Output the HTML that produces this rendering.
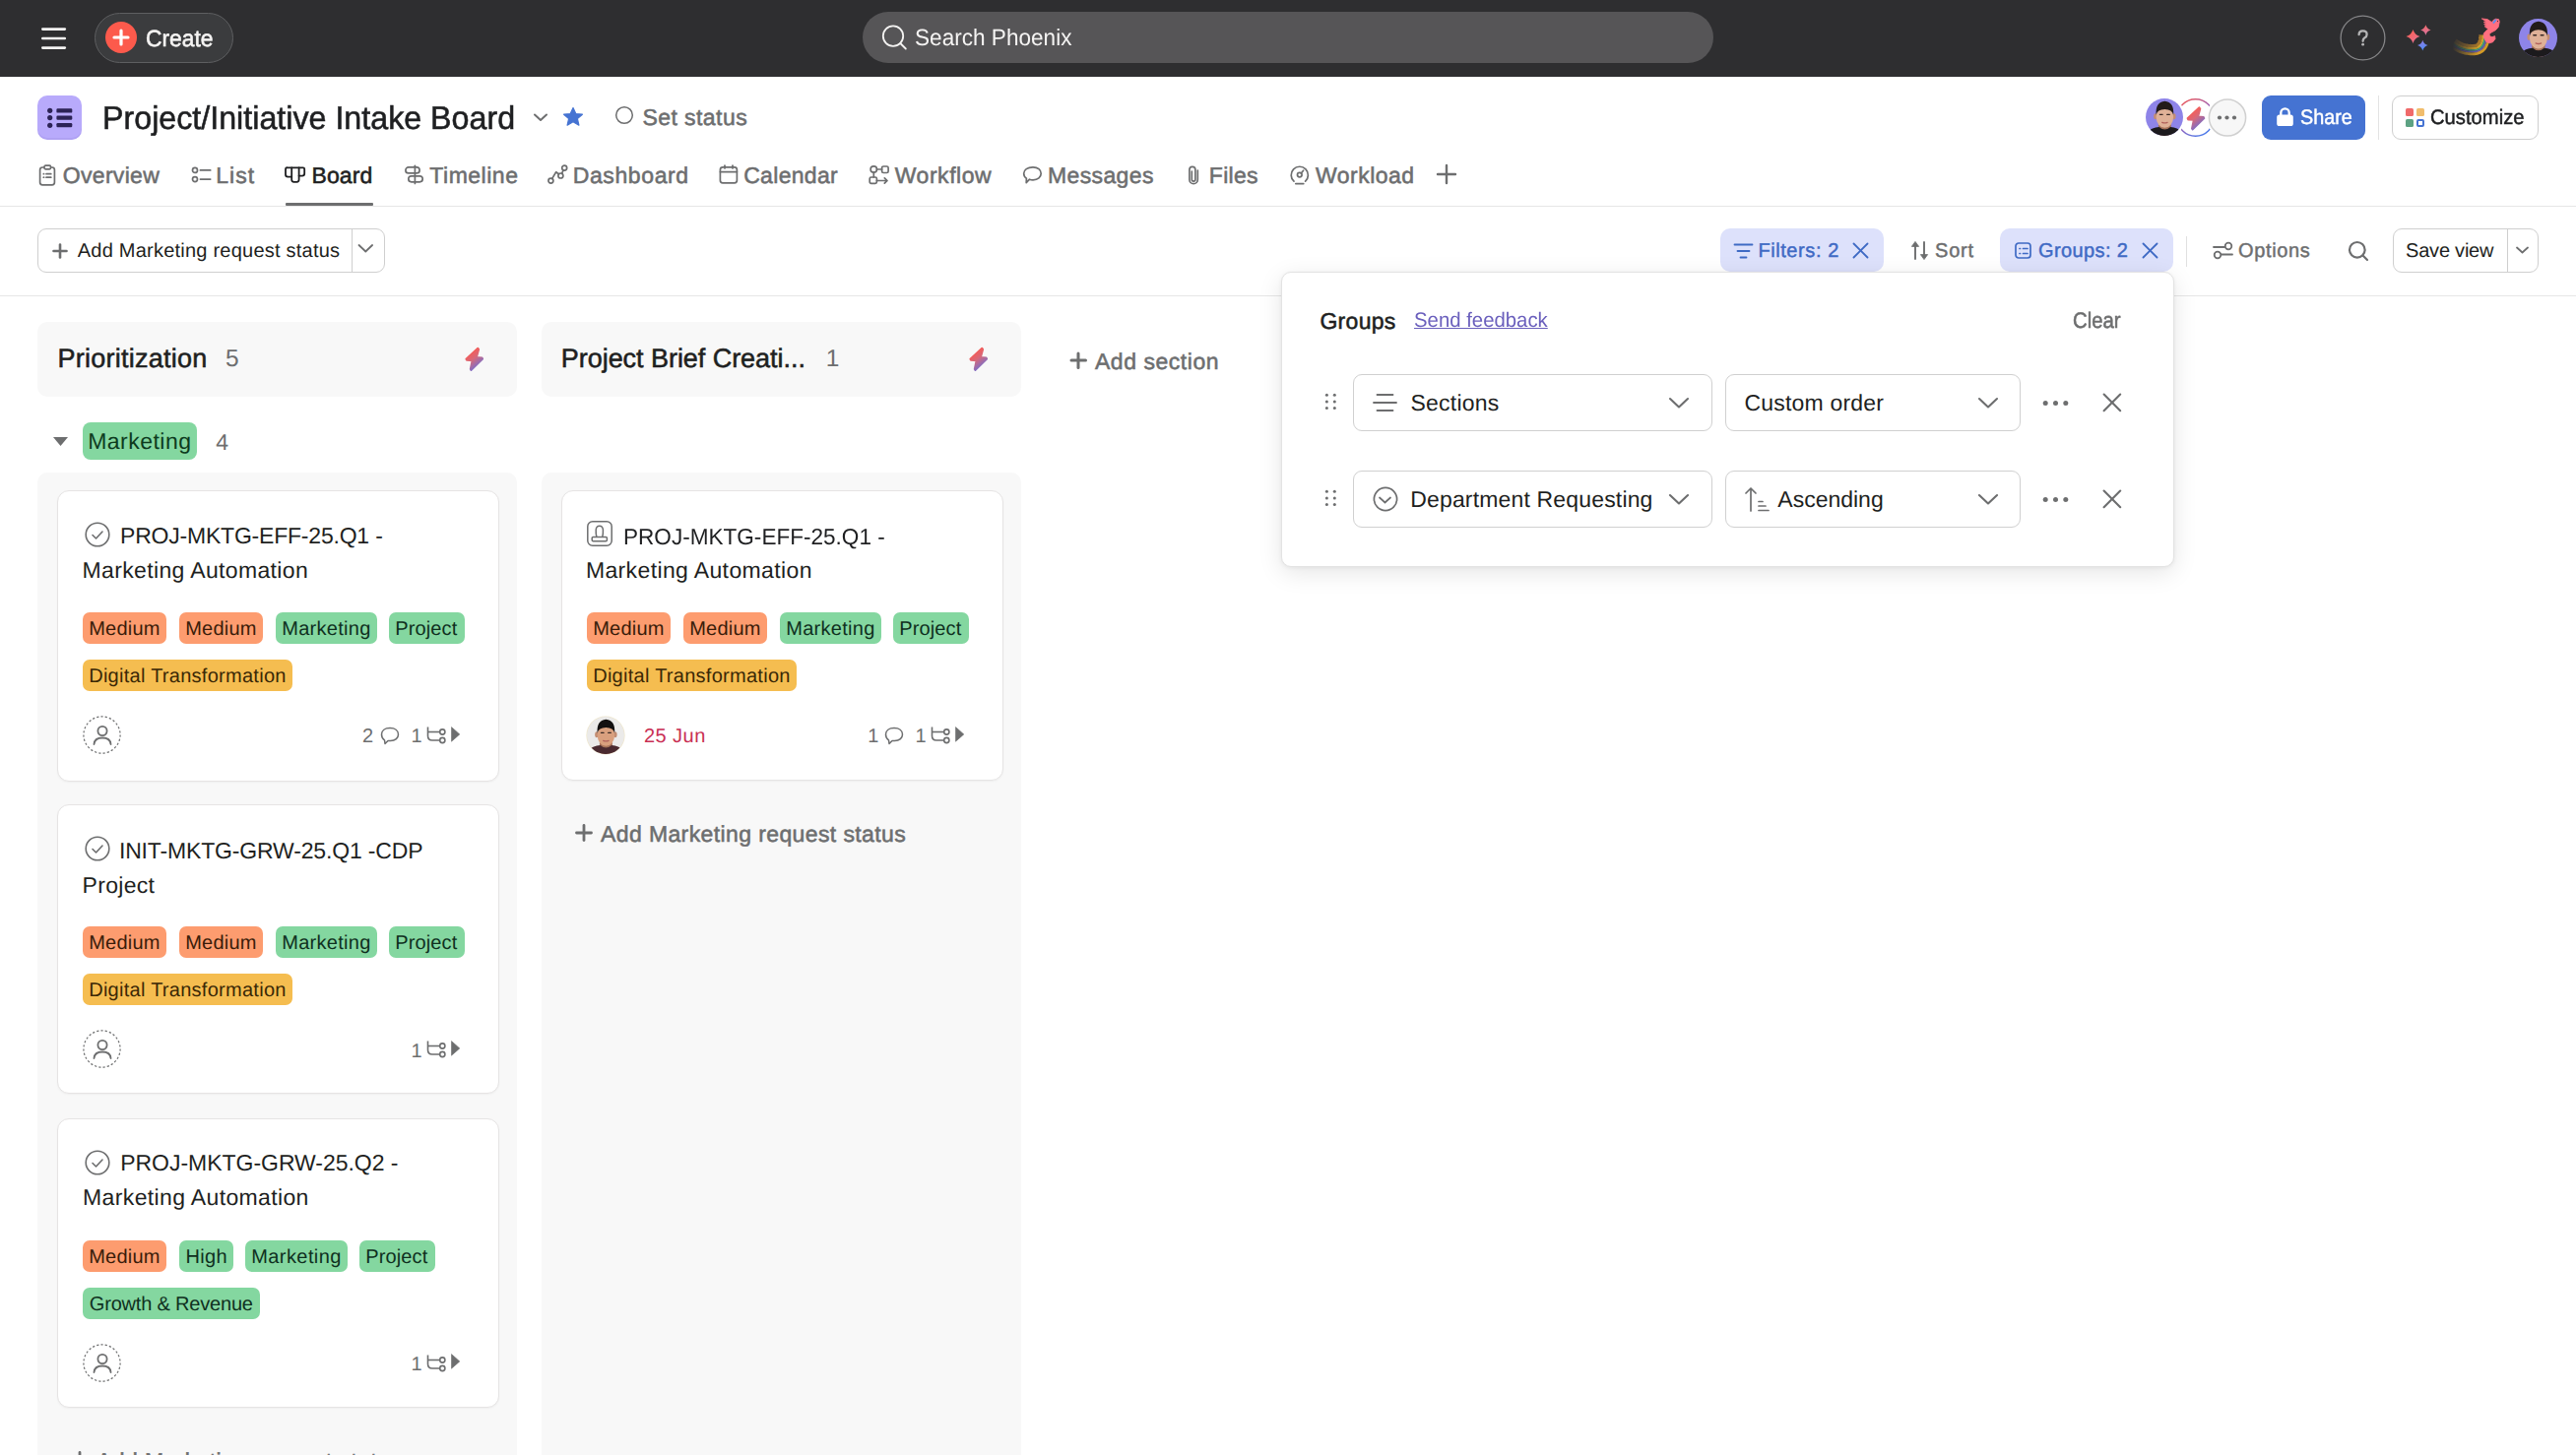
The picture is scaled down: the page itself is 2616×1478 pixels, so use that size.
<!DOCTYPE html>
<html><head><meta charset="utf-8"><style>
html,body{margin:0;padding:0;}
body{width:2616px;height:1478px;position:relative;overflow:hidden;background:#fff;font-family:"Liberation Sans",sans-serif;text-rendering:geometricPrecision;}
.t{position:absolute;white-space:nowrap;}
.r{position:absolute;}
.s{position:absolute;overflow:visible;}
</style></head><body>
<div class="r" style="left:0px;top:0px;width:2616px;height:78px;background:#2e2e30;"></div>
<svg class="s" style="left:42px;top:28px;" width="26" height="22" viewBox="0 0 26 22"><g stroke="#f5f4f3" stroke-width="2.6" stroke-linecap="round"><line x1="1.3" y1="1.6" x2="23.8" y2="1.6"/><line x1="1.3" y1="11" x2="23.8" y2="11"/><line x1="1.3" y1="20.6" x2="23.8" y2="20.6"/></g></svg>
<div class="r" style="left:96px;top:13px;width:141px;height:51px;background:#3b3c3e;border:1.5px solid #5e5f61;border-radius:26px;box-sizing:border-box;"></div>
<svg class="s" style="left:107px;top:22px;" width="32" height="32" viewBox="0 0 32 32"><circle cx="16" cy="16" r="16" fill="#fc5a4c"/><g stroke="#fff" stroke-width="3.2" stroke-linecap="round"><line x1="9" y1="16" x2="23" y2="16"/><line x1="16" y1="9" x2="16" y2="23"/></g></svg>
<div class="t" style="left:148.4px;top:28.2px;font-size:23.5px;line-height:23.5px;color:#f5f4f3;transform:scaleX(0.9708);transform-origin:0 0;-webkit-text-stroke:0.55px #f5f4f3;">Create</div>
<div class="r" style="left:876px;top:12px;width:864px;height:52px;background:#565557;border-radius:26px;"></div>
<svg class="s" style="left:893px;top:23px;" width="30" height="30" viewBox="0 0 30 30"><circle cx="14" cy="13.6" r="10.2" fill="none" stroke="#f5f4f3" stroke-width="1.8"/><line x1="21.3" y1="21" x2="26.8" y2="26.5" stroke="#f5f4f3" stroke-width="1.8" stroke-linecap="round"/></svg>
<div class="t" style="left:928.7px;top:27.0px;font-size:23.5px;line-height:23.5px;color:#f5f4f3;transform:scaleX(0.9611);transform-origin:0 0;">Search Phoenix</div>
<svg class="s" style="left:2376px;top:15px;" width="47" height="47" viewBox="0 0 47 47"><circle cx="23.5" cy="23.5" r="22.4" fill="none" stroke="#858587" stroke-width="1.3"/><path d="M19.6 20.2 Q19.6 16.4 23.6 16.4 Q27.6 16.4 27.6 19.9 Q27.6 22.3 25.2 23.6 Q23.6 24.6 23.6 26.8" fill="none" stroke="#b4b4b5" stroke-width="2.3" stroke-linecap="round"/><circle cx="23.6" cy="30.2" r="1.4" fill="#b4b4b5"/></svg>
<svg class="s" style="left:2436px;top:20px;" width="36" height="36" viewBox="0 0 36 36"><defs><linearGradient id="sp1" x1="0" y1="0" x2="0.6" y2="1"><stop offset="0" stop-color="#ff5d4a"/><stop offset="1" stop-color="#e8708e"/></linearGradient><linearGradient id="sp2" x1="0" y1="0" x2="0" y2="1"><stop offset="0" stop-color="#f26a6a"/><stop offset="1" stop-color="#d874a0"/></linearGradient><linearGradient id="sp3" x1="0" y1="0" x2="0.3" y2="1"><stop offset="0" stop-color="#9a7ae0"/><stop offset="1" stop-color="#4f8cf7"/></linearGradient></defs><path d="M14.5 10 Q16.04 15.46 21.5 17 Q16.04 18.54 14.5 24 Q12.96 18.54 7.5 17 Q12.96 15.46 14.5 10Z" fill="url(#sp1)"/><path d="M27.4 5.3 Q28.543999999999997 9.356 32.6 10.5 Q28.543999999999997 11.644 27.4 15.7 Q26.256 11.644 22.2 10.5 Q26.256 9.356 27.4 5.3Z" fill="url(#sp2)"/><path d="M24.3 20.8 Q25.466 24.934 29.6 26.1 Q25.466 27.266000000000002 24.3 31.400000000000002 Q23.134 27.266000000000002 19.0 26.1 Q23.134 24.934 24.3 20.8Z" fill="url(#sp3)"/></svg>
<svg class="s" style="left:2486px;top:14px;" width="56" height="48" viewBox="0 0 56 48"><defs><linearGradient id="tfade" x1="0" y1="0" x2="1" y2="0"><stop offset="0.08" stop-color="#fff" stop-opacity="0"/><stop offset="0.3" stop-color="#fff" stop-opacity="0.45"/><stop offset="0.55" stop-color="#fff" stop-opacity="1"/></linearGradient><mask id="tmask"><rect x="0" y="0" width="56" height="48" fill="url(#tfade)"/></mask><filter id="tblur" x="-20%" y="-20%" width="140%" height="140%"><feGaussianBlur stdDeviation="0.7"/></filter></defs><g mask="url(#tmask)"><g filter="url(#tblur)"><path d="M33.00 21.42 L32.95 22.91 L32.84 24.27 L32.68 25.50 L32.48 26.61 L32.23 27.58 L31.96 28.43 L31.66 29.16 L31.34 29.77 L31.01 30.29 L30.67 30.71 L30.31 31.08 L29.92 31.39 L29.50 31.66 L29.01 31.91 L28.44 32.13 L27.79 32.31 L27.03 32.46 L26.18 32.56 L25.22 32.61 L24.15 32.60 L24.10 32.60 L22.95 32.55 L21.84 32.47 L20.77 32.34 L19.74 32.18 L18.76 31.99 L17.81 31.77 L16.90 31.52 L16.02 31.25 L15.17 30.96 L14.36 30.64 L13.58 30.31 L12.83 29.96 L12.11 29.59 L11.41 29.22 L10.74 28.83 L10.10 28.44 L9.48 28.04 L8.88 27.63 L8.31 27.23 L7.76 26.82" stroke="#a8772a" stroke-width="3.2" fill="none"/><path d="M35.60 21.46 L35.54 23.06 L35.42 24.54 L35.25 25.90 L35.02 27.16 L34.73 28.30 L34.40 29.33 L34.02 30.25 L33.59 31.08 L33.12 31.81 L32.61 32.44 L32.05 33.00 L31.45 33.49 L30.78 33.92 L30.06 34.29 L29.26 34.59 L28.39 34.84 L27.43 35.03 L26.39 35.15 L25.27 35.21 L24.07 35.20 L24.05 35.20 L22.79 35.15 L21.58 35.05 L20.42 34.92 L19.30 34.74 L18.21 34.53 L17.17 34.29 L16.17 34.02 L15.20 33.72 L14.27 33.40 L13.38 33.05 L12.52 32.68 L11.70 32.30 L10.90 31.90 L10.14 31.49 L9.41 31.07 L8.71 30.64 L8.04 30.20 L7.40 29.77 L6.79 29.33 L6.20 28.90" stroke="#cfa22c" stroke-width="2.4" fill="none"/><path d="M37.40 21.50 L37.34 23.16 L37.21 24.72 L37.03 26.18 L36.78 27.54 L36.46 28.79 L36.09 29.95 L35.65 31.01 L35.15 31.98 L34.58 32.86 L33.95 33.64 L33.26 34.34 L32.50 34.95 L31.68 35.48 L30.79 35.93 L29.83 36.30 L28.80 36.59 L27.71 36.81 L26.55 36.94 L25.31 37.01 L24.01 37.00 L24.00 37.00 L22.68 36.95 L21.41 36.85 L20.18 36.70 L18.99 36.52 L17.84 36.30 L16.73 36.04 L15.67 35.75 L14.64 35.43 L13.65 35.08 L12.70 34.71 L11.79 34.32 L10.91 33.92 L10.07 33.49 L9.26 33.06 L8.49 32.61 L7.75 32.16 L7.05 31.70 L6.38 31.25 L5.73 30.79 L5.12 30.34" stroke="#3f9f7e" stroke-width="1.7" fill="none"/><path d="M39.10 21.53 L39.04 23.26 L38.91 24.90 L38.71 26.44 L38.44 27.89 L38.10 29.26 L37.68 30.54 L37.19 31.73 L36.62 32.83 L35.96 33.85 L35.22 34.77 L34.40 35.60 L33.50 36.33 L32.52 36.96 L31.48 37.49 L30.37 37.91 L29.20 38.25 L27.97 38.49 L26.69 38.64 L25.35 38.71 L23.95 38.70 L23.97 38.70 L22.58 38.64 L21.24 38.54 L19.95 38.39 L18.69 38.19 L17.48 37.96 L16.32 37.69 L15.19 37.38 L14.11 37.04 L13.06 36.68 L12.06 36.29 L11.09 35.88 L10.17 35.45 L9.28 35.00 L8.43 34.54 L7.62 34.07 L6.85 33.60 L6.11 33.12 L5.41 32.64 L4.74 32.17 L4.10 31.70" stroke="#6a5aae" stroke-width="1.8" fill="none"/><path d="M41.20 21.56 L41.13 23.38 L40.99 25.11 L40.78 26.76 L40.49 28.34 L40.12 29.84 L39.65 31.26 L39.09 32.61 L38.43 33.89 L37.66 35.08 L36.79 36.17 L35.81 37.16 L34.73 38.03 L33.56 38.78 L32.33 39.41 L31.03 39.91 L29.68 40.29 L28.30 40.56 L26.87 40.73 L25.39 40.81 L23.88 40.80 L23.92 40.80 L22.46 40.74 L21.04 40.63 L19.66 40.47 L18.33 40.26 L17.05 40.01 L15.80 39.72 L14.60 39.40 L13.45 39.04 L12.33 38.65 L11.27 38.23 L10.24 37.79 L9.25 37.34 L8.31 36.86 L7.41 36.37 L6.55 35.88 L5.73 35.38 L4.95 34.87 L4.21 34.37 L3.50 33.87 L2.84 33.38" stroke="#d39a26" stroke-width="2.8" fill="none"/></g></g><path fill="#ff6f80" stroke="#ff6f80" stroke-width="0.8" stroke-linejoin="round" d="M34.3 4.9 L40 5.6 L44.5 8.5 L46 6.5 L48.5 5.2 L51.5 5.6 L52.3 8 L51.2 13.5 L48.2 16.8 L44 19 L42 20.5 L42.2 22.8 L45 23.6 L47.6 22.6 L48 25.5 L45.5 28.8 L42 29.8 L38.8 28.5 L36.2 24 L36.3 20 L38.8 17.2 L41 15.6 L39.2 14.4 L37.2 12.8 L39.2 12.2 L36.6 10.6 L39.3 10.1 L36.2 8.4 L38.8 7.9Z"/><path d="M46.4 8.9 L48.4 6.4" stroke="#5b8ef0" stroke-width="1.9" fill="none" stroke-linecap="round"/><circle cx="50.5" cy="7.6" r="0.55" fill="#3a2030"/></svg>
<svg class="s" style="left:2558px;top:19px;" width="39" height="39" viewBox="0 0 39 39"><defs><clipPath id="cpa"><circle cx="19.5" cy="19.5" r="19.5"/></clipPath></defs><g clip-path="url(#cpa)"><rect width="39" height="39" fill="#8e84e8"/><rect x="13.26" y="24.18" width="13.26" height="15.60" fill="#a8745a"/><path d="M0 39.00 L2.34 34.32 Q6.24 30.42 14.04 29.64 Q19.89 35.10 25.74 29.64 Q33.54 30.42 37.05 34.32 L39 39.00Z" fill="#1c1a1d"/><ellipse cx="10.14" cy="18.72" rx="1.75" ry="3.12" fill="#c38d72"/><ellipse cx="29.64" cy="18.72" rx="1.75" ry="3.12" fill="#c38d72"/><ellipse cx="19.89" cy="19.50" rx="8.97" ry="11.11" fill="#dfb197"/><path d="M10.92 17.16 Q9.75 3.90 19.89 2.73 Q30.03 3.90 28.86 17.16 Q27.69 11.70 19.89 11.31 Q12.09 11.70 10.92 17.16Z" fill="#221b1a"/><g stroke="#3a2a25" stroke-width="1.37" stroke-linecap="round"><line x1="14.82" y1="16.77" x2="17.55" y2="16.77"/><line x1="22.23" y1="16.77" x2="24.96" y2="16.77"/></g><path d="M17.16 24.96 Q19.89 26.13 22.62 24.96" stroke="#b0605a" stroke-width="1.37" fill="none" stroke-linecap="round"/></g></svg>
<div class="r" style="left:38px;top:97px;width:45px;height:45px;background:#b8aafb;border-radius:10px;box-shadow:inset 0 -2px 0 rgba(60,40,140,0.07);"></div>
<svg class="s" style="left:38px;top:97px;" width="45" height="45" viewBox="0 0 45 45"><g fill="#2c2356"><circle cx="12.7" cy="15.3" r="2.6"/><circle cx="12.7" cy="22.6" r="2.6"/><circle cx="12.7" cy="30.3" r="2.6"/><rect x="19.4" y="13.3" width="15.9" height="4.3" rx="1.2"/><rect x="19.4" y="20.6" width="15.9" height="4.2" rx="1.2"/><rect x="19.4" y="28.1" width="15.9" height="4.2" rx="1.2"/></g></svg>
<div class="t" style="left:104.2px;top:103.0px;font-size:33px;line-height:33px;color:#1e1f21;transform:scaleX(0.9764);transform-origin:0 0;-webkit-text-stroke:0.55px #1e1f21;">Project/Initiative Intake Board</div>
<svg class="s" style="left:540px;top:113px;" width="18" height="12" viewBox="0 0 18 12"><path d="M3 3.5 L9 9 L15 3.5" fill="none" stroke="#6d6e6f" stroke-width="2" stroke-linecap="round" stroke-linejoin="round"/></svg>
<svg class="s" style="left:571px;top:108px;" width="22" height="22" viewBox="0 0 22 22"><path d="M11 1.5 L13.8 7.6 L20.4 8.2 L15.4 12.6 L16.9 19.2 L11 15.8 L5.1 19.2 L6.6 12.6 L1.6 8.2 L8.2 7.6Z" fill="#4573d2" stroke="#4573d2" stroke-width="1.2" stroke-linejoin="round"/></svg>
<svg class="s" style="left:624px;top:107px;" width="20" height="20" viewBox="0 0 20 20"><circle cx="10" cy="10" r="8.3" fill="none" stroke="#6d6e6f" stroke-width="1.5"/></svg>
<div class="t" style="left:652.4px;top:108.3px;font-size:23px;line-height:23px;color:#6d6e6f;letter-spacing:0.444px;-webkit-text-stroke:0.55px #6d6e6f;">Set status</div>
<svg class="s" style="left:2209px;top:99px;" width="41" height="41" viewBox="0 0 41 41"><defs><linearGradient id="lg2" x1="0.1" y1="0" x2="0.8" y2="1"><stop offset="0" stop-color="#f5574f"/><stop offset="0.5" stop-color="#9b62b8"/><stop offset="1" stop-color="#3f7bf0"/></linearGradient><linearGradient id="lg3" x1="0.2" y1="0.1" x2="0.7" y2="0.95"><stop offset="0" stop-color="#ff584c"/><stop offset="0.45" stop-color="#d86878"/><stop offset="1" stop-color="#6b6fd8"/></linearGradient></defs><circle cx="20.6" cy="20.5" r="18.7" fill="#fff" stroke="url(#lg2)" stroke-width="1.5"/><g transform="translate(11.2,8.6) scale(1.0)"><path d="M13.2 1.6 L14.2 2.9 L12 10.9 L17.6 11.3 L18.2 12.6 L6.4 24 L5.7 23 L7.5 14.3 L1.9 13.9 L1.3 12.6Z" fill="url(#lg3)" stroke="url(#lg3)" stroke-width="1.8" stroke-linejoin="round"/></g></svg>
<svg class="s" style="left:2176px;top:97px;" width="44" height="44" viewBox="0 0 44 44"><circle cx="22" cy="22" r="21.2" fill="#fff"/></svg>
<svg class="s" style="left:2179px;top:100px;" width="38" height="38" viewBox="0 0 38 38"><defs><clipPath id="cpb"><circle cx="19.0" cy="19.0" r="19.0"/></clipPath></defs><g clip-path="url(#cpb)"><rect width="38" height="38" fill="#8e84e8"/><rect x="12.92" y="23.56" width="12.92" height="15.20" fill="#a8745a"/><path d="M0 38.00 L2.28 33.44 Q6.08 29.64 13.68 28.88 Q19.38 34.20 25.08 28.88 Q32.68 29.64 36.10 33.44 L38 38.00Z" fill="#1c1a1d"/><ellipse cx="9.88" cy="18.24" rx="1.71" ry="3.04" fill="#c38d72"/><ellipse cx="28.88" cy="18.24" rx="1.71" ry="3.04" fill="#c38d72"/><ellipse cx="19.38" cy="19.00" rx="8.74" ry="10.83" fill="#dfb197"/><path d="M10.64 16.72 Q9.50 3.80 19.38 2.66 Q29.26 3.80 28.12 16.72 Q26.98 11.40 19.38 11.02 Q11.78 11.40 10.64 16.72Z" fill="#221b1a"/><g stroke="#3a2a25" stroke-width="1.33" stroke-linecap="round"><line x1="14.44" y1="16.34" x2="17.10" y2="16.34"/><line x1="21.66" y1="16.34" x2="24.32" y2="16.34"/></g><path d="M16.72 24.32 Q19.38 25.46 22.04 24.32" stroke="#b0605a" stroke-width="1.33" fill="none" stroke-linecap="round"/></g></svg>
<svg class="s" style="left:2240px;top:97px;" width="44" height="44" viewBox="0 0 44 44"><circle cx="22" cy="22" r="21.5" fill="#fff"/><circle cx="22" cy="22.5" r="18.6" fill="#f7f7f7" stroke="#d0d0d0" stroke-width="1.5"/><g fill="#6d6e6f"><circle cx="14" cy="22.5" r="2.1"/><circle cx="21.5" cy="22.5" r="2.1"/><circle cx="29" cy="22.5" r="2.1"/></g></svg>
<div class="r" style="left:2297px;top:97px;width:105px;height:45px;background:#4573d2;border-radius:9px;"></div>
<svg class="s" style="left:2311px;top:106px;" width="20" height="24" viewBox="0 0 20 24"><path d="M5.3 11 V8.6 A4.2 4.2 0 0 1 13.7 8.6 V11" fill="none" stroke="#fff" stroke-width="2.3"/><rect x="1.2" y="10.4" width="16.6" height="11.6" rx="2.6" fill="#fff"/></svg>
<div class="t" style="left:2336.0px;top:109.4px;font-size:21px;line-height:21px;color:#ffffff;transform:scaleX(0.9429);transform-origin:0 0;-webkit-text-stroke:0.45px #ffffff;">Share</div>
<div class="r" style="left:2414.5px;top:97px;width:1px;height:45px;background:#e3e3e3;"></div>
<div class="r" style="left:2429px;top:97px;width:149px;height:45px;background:#fff;border:1.5px solid #cfcfcf;border-radius:9px;box-sizing:border-box;"></div>
<svg class="s" style="left:2443px;top:110px;" width="20" height="20" viewBox="0 0 20 20"><rect x="0" y="0" width="8" height="8" rx="1.6" fill="#f06a6a"/><rect x="11" y="0" width="8" height="8" rx="1.6" fill="#f1bd6c"/><rect x="0" y="11" width="8" height="8" rx="1.6" fill="#5da283"/><rect x="12" y="12" width="6" height="6" rx="1" fill="none" stroke="#4573d2" stroke-width="2"/></svg>
<div class="t" style="left:2468.3px;top:109.4px;font-size:21px;line-height:21px;color:#1e1f21;transform:scaleX(0.9630);transform-origin:0 0;-webkit-text-stroke:0.45px #1e1f21;">Customize</div>
<div class="t" style="left:63.8px;top:167.3px;font-size:23px;line-height:23px;color:#6d6e6f;letter-spacing:0.300px;-webkit-text-stroke:0.55px #6d6e6f;">Overview</div>
<div class="t" style="left:219.2px;top:167.3px;font-size:23px;line-height:23px;color:#6d6e6f;letter-spacing:1.033px;-webkit-text-stroke:0.55px #6d6e6f;">List</div>
<div class="t" style="left:316.6px;top:167.3px;font-size:23px;line-height:23px;color:#1e1f21;letter-spacing:0.050px;-webkit-text-stroke:0.55px #1e1f21;">Board</div>
<div class="t" style="left:436.3px;top:167.3px;font-size:23px;line-height:23px;color:#6d6e6f;letter-spacing:0.514px;-webkit-text-stroke:0.55px #6d6e6f;">Timeline</div>
<div class="t" style="left:581.7px;top:167.3px;font-size:23px;line-height:23px;color:#6d6e6f;letter-spacing:0.613px;-webkit-text-stroke:0.55px #6d6e6f;">Dashboard</div>
<div class="t" style="left:755.2px;top:167.3px;font-size:23px;line-height:23px;color:#6d6e6f;letter-spacing:0.314px;-webkit-text-stroke:0.55px #6d6e6f;">Calendar</div>
<div class="t" style="left:908.7px;top:167.3px;font-size:23px;line-height:23px;color:#6d6e6f;letter-spacing:0.557px;-webkit-text-stroke:0.55px #6d6e6f;">Workflow</div>
<div class="t" style="left:1064.0px;top:167.3px;font-size:23px;line-height:23px;color:#6d6e6f;letter-spacing:0.371px;-webkit-text-stroke:0.55px #6d6e6f;">Messages</div>
<div class="t" style="left:1227.8px;top:167.3px;font-size:23px;line-height:23px;color:#6d6e6f;letter-spacing:0.300px;-webkit-text-stroke:0.55px #6d6e6f;">Files</div>
<div class="t" style="left:1335.9px;top:167.3px;font-size:23px;line-height:23px;color:#6d6e6f;letter-spacing:0.500px;-webkit-text-stroke:0.55px #6d6e6f;">Workload</div>
<svg class="s" style="left:38px;top:166px;" width="20" height="23" viewBox="0 0 20 23"><g fill="none" stroke="#6d6e6f" stroke-width="1.7" stroke-linecap="round" stroke-linejoin="round"><rect x="2.6" y="4" width="14.8" height="17.8" rx="2.6"/><rect x="7" y="2.2" width="6.5" height="3.6" rx="1.2" fill="#fff"/><line x1="6.3" y1="10.7" x2="6.6" y2="10.7"/><line x1="9" y1="10.7" x2="13.8" y2="10.7"/><line x1="6.3" y1="14.2" x2="6.6" y2="14.2"/><line x1="9" y1="14.2" x2="13.8" y2="14.2"/></g></svg>
<svg class="s" style="left:192px;top:166px;" width="24" height="22" viewBox="0 0 24 22"><g fill="none" stroke="#6d6e6f" stroke-width="1.7" stroke-linecap="round" stroke-linejoin="round"><circle cx="6" cy="6.9" r="2.5"/><circle cx="6" cy="16.1" r="2.5"/><line x1="11.4" y1="6.9" x2="21.7" y2="6.9"/><line x1="11.4" y1="16.1" x2="21.7" y2="16.1"/></g></svg>
<svg class="s" style="left:288px;top:167px;" width="23" height="21" viewBox="0 0 23 21"><g fill="none" stroke="#1e1f21" stroke-width="1.8" stroke-linecap="round" stroke-linejoin="round"><path d="M3.2 3.3 H19.8 Q21.2 3.3 21.2 4.7 V9.3 Q21.2 11.6 18.9 11.6 H15.6"/><path d="M3.2 3.3 Q2 3.3 2 4.7 V10.3 Q2 12.6 4.3 12.6 H8.2"/><path d="M8.2 3.3 V15.6 Q8.2 17.8 10.4 17.8 H13.4 Q15.6 17.8 15.6 15.6 V3.3"/></g></svg>
<svg class="s" style="left:409px;top:166px;" width="23" height="23" viewBox="0 0 23 23"><g fill="none" stroke="#6d6e6f" stroke-width="1.7" stroke-linecap="round" stroke-linejoin="round"><line x1="12.4" y1="2.3" x2="12.4" y2="20.5"/><rect x="2.9" y="3.9" width="14.2" height="6" rx="3"/><rect x="5.8" y="12.8" width="14.4" height="6" rx="3"/></g></svg>
<svg class="s" style="left:555px;top:166px;" width="22" height="22" viewBox="0 0 22 22"><g fill="none" stroke="#6d6e6f" stroke-width="1.7" stroke-linecap="round" stroke-linejoin="round"><circle cx="4.4" cy="17.6" r="2.5"/><circle cx="14.4" cy="12.5" r="2.5"/><circle cx="18.2" cy="4.6" r="2.5"/><path d="M5.7 15.4 L9.7 8.8 L12.6 11"/><line x1="15.5" y1="10.3" x2="17.1" y2="6.9"/></g></svg>
<svg class="s" style="left:729px;top:166px;" width="22" height="22" viewBox="0 0 22 22"><g fill="none" stroke="#6d6e6f" stroke-width="1.7" stroke-linecap="round" stroke-linejoin="round"><rect x="2.4" y="3.8" width="17" height="16" rx="2.6"/><line x1="2.4" y1="8.6" x2="19.4" y2="8.6"/><line x1="7" y1="2.2" x2="7" y2="5"/><line x1="15" y1="2.2" x2="15" y2="5"/></g></svg>
<svg class="s" style="left:881px;top:166px;" width="23" height="23" viewBox="0 0 23 23"><g fill="none" stroke="#6d6e6f" stroke-width="1.7" stroke-linecap="round" stroke-linejoin="round"><circle cx="6.3" cy="6" r="3.2"/><rect x="14.6" y="3" width="6.5" height="6.5" rx="1.6"/><rect x="2.2" y="14" width="7.2" height="6.4" rx="1.6"/><line x1="9.5" y1="6" x2="14.6" y2="6"/><line x1="6.3" y1="9.2" x2="6.3" y2="14"/><path d="M9.4 17.5 H20 M17.3 14.8 L20 17.5 L17.3 20.2"/></g></svg>
<svg class="s" style="left:1037px;top:167px;" width="23" height="22" viewBox="0 0 23 22"><g fill="none" stroke="#6d6e6f" stroke-width="1.7" stroke-linecap="round" stroke-linejoin="round"><path d="M12 2.8 C17 2.8 20.2 5.6 20.2 9.3 C20.2 13 17 15.8 12 15.8 C10.7 15.8 9.5 15.6 8.5 15.2 L5.2 18.6 L5.4 14.2 C3.6 13 2.7 11.3 2.7 9.3 C2.7 5.6 6.5 2.8 12 2.8Z"/></g></svg>
<svg class="s" style="left:1204px;top:166px;" width="17" height="23" viewBox="0 0 17 23"><g fill="none" stroke="#6d6e6f" stroke-width="1.7" stroke-linecap="round" stroke-linejoin="round"><path d="M12.3 7 V16.5 A4.2 4.2 0 0 1 3.9 16.5 V6.3 A3 3 0 0 1 9.9 6.3 V16.3 A1.8 1.8 0 0 1 6.3 16.3 V8.2"/></g></svg>
<svg class="s" style="left:1308px;top:166px;" width="23" height="23" viewBox="0 0 23 23"><g fill="none" stroke="#6d6e6f" stroke-width="1.7" stroke-linecap="round" stroke-linejoin="round"><path d="M6 18.2 A8.6 8.6 0 1 1 17.6 18.2"/><circle cx="11.8" cy="11.6" r="2.3"/><line x1="13.3" y1="10" x2="15.6" y2="7.2"/><line x1="7.8" y1="20.6" x2="15.8" y2="20.6"/></g></svg>
<svg class="s" style="left:1458px;top:166px;" width="22" height="22" viewBox="0 0 22 22"><g stroke="#6d6e6f" stroke-width="2.4" stroke-linecap="round"><line x1="11" y1="2" x2="11" y2="20"/><line x1="2" y1="11" x2="20" y2="11"/></g></svg>
<div class="r" style="left:290px;top:206px;width:89px;height:3px;background:#6d6e6f;border-radius:1px;"></div>
<div class="r" style="left:0px;top:209px;width:2616px;height:1px;background:#e6e6e6;"></div>
<div class="r" style="left:38px;top:232px;width:353px;height:45px;background:#fff;border:1.5px solid #cfcfcf;border-radius:9px;box-sizing:border-box;"></div>
<div class="r" style="left:357px;top:233px;width:1.2px;height:43px;background:#cfcfcf;"></div>
<svg class="s" style="left:53px;top:247px;" width="16" height="16" viewBox="0 0 16 16"><g stroke="#6d6e6f" stroke-width="2.6" stroke-linecap="round"><line x1="8" y1="1.5" x2="8" y2="14.5"/><line x1="1.5" y1="8" x2="14.5" y2="8"/></g></svg>
<div class="t" style="left:78.8px;top:244.8px;font-size:20px;line-height:20px;color:#1e1f21;letter-spacing:0.226px;">Add Marketing request status</div>
<svg class="s" style="left:362px;top:246px;" width="18" height="13" viewBox="0 0 18 13"><path d="M2.5 3 L9.3 9.5 L16.1 3" fill="none" stroke="#6d6e6f" stroke-width="1.8" stroke-linecap="round" stroke-linejoin="round"/></svg>
<div class="r" style="left:1747px;top:232px;width:166px;height:44px;background:#dde1fb;border-radius:10px;"></div>
<svg class="s" style="left:1760px;top:246px;" width="21" height="18" viewBox="0 0 21 18"><g stroke="#3f6ac4" stroke-width="1.8" stroke-linecap="round"><line x1="1.5" y1="2.5" x2="19.5" y2="2.5"/><line x1="4.5" y1="9" x2="16.5" y2="9"/><line x1="7.5" y1="15.5" x2="13.5" y2="15.5"/></g></svg>
<div class="t" style="left:1785.4px;top:244.8px;font-size:20px;line-height:20px;color:#3f6ac4;letter-spacing:0.578px;-webkit-text-stroke:0.45px #3f6ac4;">Filters: 2</div>
<svg class="s" style="left:1881px;top:246px;" width="17" height="17" viewBox="0 0 17 17"><g stroke="#3f6ac4" stroke-width="1.8" stroke-linecap="round"><line x1="1.5" y1="1.5" x2="15.5" y2="15.5"/><line x1="15.5" y1="1.5" x2="1.5" y2="15.5"/></g></svg>
<svg class="s" style="left:1940px;top:244px;" width="19" height="21" viewBox="0 0 19 21"><g stroke="#6d6e6f" stroke-width="1.9" stroke-linecap="round"><line x1="5" y1="5" x2="5" y2="19"/><line x1="14" y1="2" x2="14" y2="16"/></g><g fill="#6d6e6f" stroke="#6d6e6f" stroke-width="0.8" stroke-linejoin="round"><path d="M1.4 6.4 L5 1.4 L8.6 6.4Z"/><path d="M10.4 14.6 L14 19.6 L17.6 14.6Z"/></g></svg>
<div class="t" style="left:1965.1px;top:244.8px;font-size:20px;line-height:20px;color:#6d6e6f;letter-spacing:0.767px;-webkit-text-stroke:0.45px #6d6e6f;">Sort</div>
<div class="r" style="left:2031px;top:232px;width:176px;height:44px;background:#dde1fb;border-radius:10px;"></div>
<svg class="s" style="left:2046px;top:246px;" width="18" height="18" viewBox="0 0 18 18"><g fill="none" stroke="#3f6ac4" stroke-width="1.7" stroke-linecap="round"><rect x="1" y="1" width="15" height="15" rx="3"/><line x1="5" y1="6.5" x2="5.5" y2="6.5"/><line x1="8.5" y1="6.5" x2="13" y2="6.5"/><line x1="5" y1="11.5" x2="5.5" y2="11.5"/><line x1="8.5" y1="11.5" x2="13" y2="11.5"/></g></svg>
<div class="t" style="left:2070.0px;top:244.8px;font-size:20px;line-height:20px;color:#3f6ac4;letter-spacing:0.387px;-webkit-text-stroke:0.45px #3f6ac4;">Groups: 2</div>
<svg class="s" style="left:2175px;top:246px;" width="17" height="17" viewBox="0 0 17 17"><g stroke="#3f6ac4" stroke-width="1.8" stroke-linecap="round"><line x1="1.5" y1="1.5" x2="15.5" y2="15.5"/><line x1="15.5" y1="1.5" x2="1.5" y2="15.5"/></g></svg>
<div class="r" style="left:2220px;top:240px;width:1.2px;height:31px;background:#e0e0e0;"></div>
<svg class="s" style="left:2247px;top:245px;" width="21" height="19" viewBox="0 0 21 19"><g fill="none" stroke="#6d6e6f" stroke-width="1.8" stroke-linecap="round"><line x1="1" y1="6" x2="12" y2="6"/><circle cx="16" cy="5" r="3.3"/><line x1="9" y1="13.5" x2="20" y2="13.5"/><circle cx="5" cy="14" r="3.3"/></g></svg>
<div class="t" style="left:2273.1px;top:244.8px;font-size:20px;line-height:20px;color:#6d6e6f;letter-spacing:0.617px;-webkit-text-stroke:0.45px #6d6e6f;">Options</div>
<svg class="s" style="left:2384px;top:244px;" width="22" height="22" viewBox="0 0 22 22"><circle cx="9.8" cy="9.8" r="7.8" fill="none" stroke="#6d6e6f" stroke-width="2.2"/><line x1="15.5" y1="15.5" x2="20" y2="20" stroke="#6d6e6f" stroke-width="2.2" stroke-linecap="round"/></svg>
<div class="r" style="left:2430px;top:232px;width:148px;height:45px;background:#fff;border:1.5px solid #cfcfcf;border-radius:9px;box-sizing:border-box;"></div>
<div class="r" style="left:2546px;top:233px;width:1.2px;height:43px;background:#cfcfcf;"></div>
<div class="t" style="left:2443.1px;top:244.8px;font-size:20px;line-height:20px;color:#1e1f21;letter-spacing:-0.225px;">Save view</div>
<svg class="s" style="left:2553px;top:248px;" width="17" height="12" viewBox="0 0 17 12"><path d="M3 3.5 L8.5 8.5 L14 3.5" fill="none" stroke="#6d6e6f" stroke-width="1.8" stroke-linecap="round" stroke-linejoin="round"/></svg>
<div class="r" style="left:0px;top:300px;width:2616px;height:1px;background:#e6e6e6;"></div>
<div class="r" style="left:38px;top:327px;width:487px;height:76px;background:#f8f8f8;border-radius:10px;"></div>
<div class="r" style="left:38px;top:480px;width:487px;height:1000px;background:#f8f8f8;border-radius:10px 10px 0 0;"></div>
<div class="r" style="left:550px;top:327px;width:487px;height:76px;background:#f8f8f8;border-radius:10px;"></div>
<div class="r" style="left:550px;top:480px;width:487px;height:1000px;background:#f8f8f8;border-radius:10px 10px 0 0;"></div>
<div class="t" style="left:58.4px;top:351.0px;font-size:27px;line-height:27px;color:#1e1f21;letter-spacing:0.262px;-webkit-text-stroke:0.55px #1e1f21;">Prioritization</div>
<div class="t" style="left:228.9px;top:352.6px;font-size:24.5px;line-height:24.5px;color:#6d6e6f;">5</div>
<div class="t" style="left:569.8px;top:351.0px;font-size:27px;line-height:27px;color:#1e1f21;letter-spacing:-0.045px;-webkit-text-stroke:0.55px #1e1f21;">Project Brief Creati...</div>
<div class="t" style="left:838.7px;top:352.6px;font-size:24.5px;line-height:24.5px;color:#6d6e6f;">1</div>
<svg class="s" style="left:472px;top:352px;" width="20" height="26" viewBox="0 0 20 26"><defs><linearGradient id="bg1" x1="0.2" y1="0.1" x2="0.7" y2="0.95"><stop offset="0" stop-color="#ff584c"/><stop offset="0.45" stop-color="#d86878"/><stop offset="1" stop-color="#6b6fd8"/></linearGradient></defs><path d="M13.2 1.6 L14.2 2.9 L12 10.9 L17.6 11.3 L18.2 12.6 L6.4 24 L5.7 23 L7.5 14.3 L1.9 13.9 L1.3 12.6Z" fill="url(#bg1)" stroke="url(#bg1)" stroke-width="1.8" stroke-linejoin="round"/></svg>
<svg class="s" style="left:984px;top:352px;" width="20" height="26" viewBox="0 0 20 26"><defs><linearGradient id="bg2" x1="0.2" y1="0.1" x2="0.7" y2="0.95"><stop offset="0" stop-color="#ff584c"/><stop offset="0.45" stop-color="#d86878"/><stop offset="1" stop-color="#6b6fd8"/></linearGradient></defs><path d="M13.2 1.6 L14.2 2.9 L12 10.9 L17.6 11.3 L18.2 12.6 L6.4 24 L5.7 23 L7.5 14.3 L1.9 13.9 L1.3 12.6Z" fill="url(#bg2)" stroke="url(#bg2)" stroke-width="1.8" stroke-linejoin="round"/></svg>
<svg class="s" style="left:1086px;top:357px;" width="18" height="18" viewBox="0 0 18 18"><g stroke="#6d6e6f" stroke-width="3" stroke-linecap="round"><line x1="9" y1="2" x2="9" y2="16.5"/><line x1="2" y1="9" x2="16.5" y2="9"/></g></svg>
<div class="t" style="left:1112.0px;top:356.3px;font-size:23px;line-height:23px;color:#6d6e6f;letter-spacing:0.530px;-webkit-text-stroke:0.55px #6d6e6f;">Add section</div>
<svg class="s" style="left:53px;top:443px;" width="17" height="11" viewBox="0 0 17 11"><path d="M1 1 H16 L8.5 10Z" fill="#6d6e6f"/></svg>
<div class="r" style="left:84px;top:429px;width:116px;height:38px;background:#84d7a0;border-radius:8px;"></div>
<div class="t" style="left:89.2px;top:437.3px;font-size:23px;line-height:23px;color:#0d3b1e;letter-spacing:0.475px;">Marketing</div>
<div class="t" style="left:219.3px;top:437.8px;font-size:23px;line-height:23px;color:#6d6e6f;">4</div>
<div class="r" style="left:57.5px;top:498px;width:449px;height:295.5px;background:#fff;border:1.5px solid #e6e4e4;border-radius:12px;box-sizing:border-box;box-shadow:0 1px 2px rgba(0,0,0,0.04);"></div>
<svg class="s" style="left:86.0px;top:530px;" width="26" height="26" viewBox="0 0 26 26"><circle cx="13" cy="13" r="11.8" fill="none" stroke="#6d6e6f" stroke-width="1.6"/><path d="M8 13.5 L11.5 17 L18 10" fill="none" stroke="#6d6e6f" stroke-width="1.6" stroke-linecap="round" stroke-linejoin="round"/></svg>
<div class="t" style="left:122.0px;top:533.3px;font-size:23px;line-height:23px;color:#1e1f21;letter-spacing:-0.205px;">PROJ-MKTG-EFF-25.Q1 -</div>
<div class="t" style="left:83.5px;top:568.1px;font-size:23px;line-height:23px;color:#1e1f21;letter-spacing:0.358px;">Marketing Automation</div>
<div class="r" style="left:84.0px;top:622px;width:85px;height:32px;background:#fd9c6f;border-radius:7px;"></div>
<div class="t" style="left:90.2px;top:628.8px;font-size:20px;line-height:20px;color:#3a1c0a;letter-spacing:0.220px;">Medium</div>
<div class="r" style="left:182.0px;top:622px;width:85px;height:32px;background:#fd9c6f;border-radius:7px;"></div>
<div class="t" style="left:188.2px;top:628.8px;font-size:20px;line-height:20px;color:#3a1c0a;letter-spacing:0.220px;">Medium</div>
<div class="r" style="left:280.0px;top:622px;width:103px;height:32px;background:#84d7a0;border-radius:7px;"></div>
<div class="t" style="left:286.2px;top:628.8px;font-size:20px;line-height:20px;color:#0f3020;letter-spacing:0.300px;">Marketing</div>
<div class="r" style="left:395.0px;top:622px;width:77px;height:32px;background:#84d7a0;border-radius:7px;"></div>
<div class="t" style="left:401.2px;top:628.8px;font-size:20px;line-height:20px;color:#0f3020;letter-spacing:0.133px;">Project</div>
<div class="r" style="left:84.0px;top:670px;width:213px;height:32px;background:#f5bd50;border-radius:7px;"></div>
<div class="t" style="left:90.2px;top:676.8px;font-size:20px;line-height:20px;color:#3a2806;letter-spacing:0.271px;">Digital Transformation</div>
<svg class="s" style="left:84.0px;top:727px;" width="40" height="40" viewBox="0 0 40 40"><circle cx="19.5" cy="19.5" r="18.6" fill="none" stroke="#6d6e6f" stroke-width="1.2" stroke-dasharray="2.2 2.1"/><circle cx="20" cy="15.5" r="4.6" fill="none" stroke="#6d6e6f" stroke-width="1.8"/><path d="M11.5 29 Q12 22.5 20 22.5 Q28 22.5 28.5 29" fill="none" stroke="#6d6e6f" stroke-width="1.8" stroke-linecap="round"/></svg>
<div class="t" style="left:368.0px;top:738.1px;font-size:20px;line-height:20px;color:#6d6e6f;">2</div>
<svg class="s" style="left:386.0px;top:738px;" width="20" height="19" viewBox="0 0 20 19"><path d="M10 1.5 C15 1.5 18.5 4 18.5 8 C18.5 11.5 15.5 14.5 10.5 14.5 H8 L5 17.5 L4.5 13.8 C2.5 12.5 1.5 10.5 1.5 8 C1.5 4 5 1.5 10 1.5Z" fill="none" stroke="#6d6e6f" stroke-width="1.5" stroke-linejoin="round"/></svg>
<div class="t" style="left:417.5px;top:738.1px;font-size:20px;line-height:20px;color:#6d6e6f;">1</div>
<svg class="s" style="left:432.5px;top:738px;" width="22" height="18" viewBox="0 0 22 18"><g fill="none" stroke="#6d6e6f" stroke-width="1.6"><path d="M1.5 0.5 V9.5 Q1.5 14 6 14 H13.5"/><line x1="1.5" y1="5.5" x2="13.5" y2="5.5"/><circle cx="16.3" cy="5.5" r="2.6"/><circle cx="16.3" cy="14" r="2.6"/></g></svg>
<svg class="s" style="left:457.9px;top:737.5px;" width="10" height="16" viewBox="0 0 10 16"><path d="M0.5 0.6 L8.8 7.9 L0.5 15.2Z" fill="#6d6e6f" stroke="#6d6e6f" stroke-width="0.6" stroke-linejoin="round"/></svg>
<div class="r" style="left:57.5px;top:817.4px;width:449px;height:294px;background:#fff;border:1.5px solid #e6e4e4;border-radius:12px;box-sizing:border-box;box-shadow:0 1px 2px rgba(0,0,0,0.04);"></div>
<svg class="s" style="left:86.0px;top:849.4px;" width="26" height="26" viewBox="0 0 26 26"><circle cx="13" cy="13" r="11.8" fill="none" stroke="#6d6e6f" stroke-width="1.6"/><path d="M8 13.5 L11.5 17 L18 10" fill="none" stroke="#6d6e6f" stroke-width="1.6" stroke-linecap="round" stroke-linejoin="round"/></svg>
<div class="t" style="left:120.9px;top:852.7px;font-size:23px;line-height:23px;color:#1e1f21;letter-spacing:-0.152px;">INIT-MKTG-GRW-25.Q1 -CDP</div>
<div class="t" style="left:83.5px;top:887.5px;font-size:23px;line-height:23px;color:#1e1f21;letter-spacing:0.317px;">Project</div>
<div class="r" style="left:84.0px;top:941.4px;width:85px;height:32px;background:#fd9c6f;border-radius:7px;"></div>
<div class="t" style="left:90.2px;top:948.2px;font-size:20px;line-height:20px;color:#3a1c0a;letter-spacing:0.220px;">Medium</div>
<div class="r" style="left:182.0px;top:941.4px;width:85px;height:32px;background:#fd9c6f;border-radius:7px;"></div>
<div class="t" style="left:188.2px;top:948.2px;font-size:20px;line-height:20px;color:#3a1c0a;letter-spacing:0.220px;">Medium</div>
<div class="r" style="left:280.0px;top:941.4px;width:103px;height:32px;background:#84d7a0;border-radius:7px;"></div>
<div class="t" style="left:286.2px;top:948.2px;font-size:20px;line-height:20px;color:#0f3020;letter-spacing:0.300px;">Marketing</div>
<div class="r" style="left:395.0px;top:941.4px;width:77px;height:32px;background:#84d7a0;border-radius:7px;"></div>
<div class="t" style="left:401.2px;top:948.2px;font-size:20px;line-height:20px;color:#0f3020;letter-spacing:0.133px;">Project</div>
<div class="r" style="left:84.0px;top:989.4px;width:213px;height:32px;background:#f5bd50;border-radius:7px;"></div>
<div class="t" style="left:90.2px;top:996.2px;font-size:20px;line-height:20px;color:#3a2806;letter-spacing:0.271px;">Digital Transformation</div>
<svg class="s" style="left:84.0px;top:1046.4px;" width="40" height="40" viewBox="0 0 40 40"><circle cx="19.5" cy="19.5" r="18.6" fill="none" stroke="#6d6e6f" stroke-width="1.2" stroke-dasharray="2.2 2.1"/><circle cx="20" cy="15.5" r="4.6" fill="none" stroke="#6d6e6f" stroke-width="1.8"/><path d="M11.5 29 Q12 22.5 20 22.5 Q28 22.5 28.5 29" fill="none" stroke="#6d6e6f" stroke-width="1.8" stroke-linecap="round"/></svg>
<div class="t" style="left:417.5px;top:1057.5px;font-size:20px;line-height:20px;color:#6d6e6f;">1</div>
<svg class="s" style="left:432.5px;top:1057.4px;" width="22" height="18" viewBox="0 0 22 18"><g fill="none" stroke="#6d6e6f" stroke-width="1.6"><path d="M1.5 0.5 V9.5 Q1.5 14 6 14 H13.5"/><line x1="1.5" y1="5.5" x2="13.5" y2="5.5"/><circle cx="16.3" cy="5.5" r="2.6"/><circle cx="16.3" cy="14" r="2.6"/></g></svg>
<svg class="s" style="left:457.9px;top:1056.9px;" width="10" height="16" viewBox="0 0 10 16"><path d="M0.5 0.6 L8.8 7.9 L0.5 15.2Z" fill="#6d6e6f" stroke="#6d6e6f" stroke-width="0.6" stroke-linejoin="round"/></svg>
<div class="r" style="left:57.5px;top:1135.8px;width:449px;height:294.5px;background:#fff;border:1.5px solid #e6e4e4;border-radius:12px;box-sizing:border-box;box-shadow:0 1px 2px rgba(0,0,0,0.04);"></div>
<svg class="s" style="left:86.0px;top:1167.8px;" width="26" height="26" viewBox="0 0 26 26"><circle cx="13" cy="13" r="11.8" fill="none" stroke="#6d6e6f" stroke-width="1.6"/><path d="M8 13.5 L11.5 17 L18 10" fill="none" stroke="#6d6e6f" stroke-width="1.6" stroke-linecap="round" stroke-linejoin="round"/></svg>
<div class="t" style="left:122.2px;top:1170.3px;font-size:23px;line-height:23px;color:#1e1f21;letter-spacing:-0.025px;">PROJ-MKTG-GRW-25.Q2 -</div>
<div class="t" style="left:84.1px;top:1205.1px;font-size:23px;line-height:23px;color:#1e1f21;letter-spacing:0.358px;">Marketing Automation</div>
<div class="r" style="left:84.0px;top:1259.8px;width:85px;height:32px;background:#fd9c6f;border-radius:7px;"></div>
<div class="t" style="left:90.2px;top:1266.6px;font-size:20px;line-height:20px;color:#3a1c0a;letter-spacing:0.220px;">Medium</div>
<div class="r" style="left:182.3px;top:1259.8px;width:55px;height:32px;background:#84d7a0;border-radius:7px;"></div>
<div class="t" style="left:188.5px;top:1266.6px;font-size:20px;line-height:20px;color:#0f3020;letter-spacing:0.367px;">High</div>
<div class="r" style="left:249.0px;top:1259.8px;width:104px;height:32px;background:#84d7a0;border-radius:7px;"></div>
<div class="t" style="left:255.2px;top:1266.6px;font-size:20px;line-height:20px;color:#0f3020;letter-spacing:0.425px;">Marketing</div>
<div class="r" style="left:365.0px;top:1259.8px;width:77px;height:32px;background:#84d7a0;border-radius:7px;"></div>
<div class="t" style="left:371.2px;top:1266.6px;font-size:20px;line-height:20px;color:#0f3020;letter-spacing:0.133px;">Project</div>
<div class="r" style="left:84.0px;top:1307.8px;width:180px;height:32px;background:#84d7a0;border-radius:7px;"></div>
<div class="t" style="left:90.8px;top:1314.6px;font-size:20px;line-height:20px;color:#0f3020;letter-spacing:-0.187px;">Growth &amp; Revenue</div>
<svg class="s" style="left:84.0px;top:1364.8px;" width="40" height="40" viewBox="0 0 40 40"><circle cx="19.5" cy="19.5" r="18.6" fill="none" stroke="#6d6e6f" stroke-width="1.2" stroke-dasharray="2.2 2.1"/><circle cx="20" cy="15.5" r="4.6" fill="none" stroke="#6d6e6f" stroke-width="1.8"/><path d="M11.5 29 Q12 22.5 20 22.5 Q28 22.5 28.5 29" fill="none" stroke="#6d6e6f" stroke-width="1.8" stroke-linecap="round"/></svg>
<div class="t" style="left:417.5px;top:1375.9px;font-size:20px;line-height:20px;color:#6d6e6f;">1</div>
<svg class="s" style="left:432.5px;top:1375.8px;" width="22" height="18" viewBox="0 0 22 18"><g fill="none" stroke="#6d6e6f" stroke-width="1.6"><path d="M1.5 0.5 V9.5 Q1.5 14 6 14 H13.5"/><line x1="1.5" y1="5.5" x2="13.5" y2="5.5"/><circle cx="16.3" cy="5.5" r="2.6"/><circle cx="16.3" cy="14" r="2.6"/></g></svg>
<svg class="s" style="left:457.9px;top:1375.3px;" width="10" height="16" viewBox="0 0 10 16"><path d="M0.5 0.6 L8.8 7.9 L0.5 15.2Z" fill="#6d6e6f" stroke="#6d6e6f" stroke-width="0.6" stroke-linejoin="round"/></svg>
<div class="r" style="left:569.5px;top:498.2px;width:449px;height:295.2px;background:#fff;border:1.5px solid #e6e4e4;border-radius:12px;box-sizing:border-box;box-shadow:0 1px 2px rgba(0,0,0,0.04);"></div>
<svg class="s" style="left:595.8px;top:528.7px;" width="27" height="27" viewBox="0 0 27 27"><g fill="none" stroke="#6d6e6f" stroke-width="1.5"><rect x="0.8" y="0.8" width="24.4" height="24.4" rx="5"/><path d="M9.8 16.2 Q9 12.5 9.2 9.2 Q9.5 5.2 12.8 5.2 Q16.1 5.2 16.4 9.2 Q16.6 12.5 15.8 16.2"/><rect x="5.2" y="16.4" width="15.2" height="4.3" rx="1.2"/></g></svg>
<div class="t" style="left:633.4px;top:533.5px;font-size:23px;line-height:23px;color:#1e1f21;transform:scaleX(0.9810);transform-origin:0 0;">PROJ-MKTG-EFF-25.Q1 -</div>
<div class="t" style="left:594.9px;top:568.3px;font-size:23px;line-height:23px;color:#1e1f21;letter-spacing:0.374px;">Marketing Automation</div>
<div class="r" style="left:596.0px;top:622.2px;width:85px;height:32px;background:#fd9c6f;border-radius:7px;"></div>
<div class="t" style="left:602.2px;top:629.0px;font-size:20px;line-height:20px;color:#3a1c0a;letter-spacing:0.220px;">Medium</div>
<div class="r" style="left:694.0px;top:622.2px;width:85px;height:32px;background:#fd9c6f;border-radius:7px;"></div>
<div class="t" style="left:700.2px;top:629.0px;font-size:20px;line-height:20px;color:#3a1c0a;letter-spacing:0.220px;">Medium</div>
<div class="r" style="left:792.0px;top:622.2px;width:103px;height:32px;background:#84d7a0;border-radius:7px;"></div>
<div class="t" style="left:798.2px;top:629.0px;font-size:20px;line-height:20px;color:#0f3020;letter-spacing:0.300px;">Marketing</div>
<div class="r" style="left:907.0px;top:622.2px;width:77px;height:32px;background:#84d7a0;border-radius:7px;"></div>
<div class="t" style="left:913.2px;top:629.0px;font-size:20px;line-height:20px;color:#0f3020;letter-spacing:0.133px;">Project</div>
<div class="r" style="left:596.0px;top:670.2px;width:213px;height:32px;background:#f5bd50;border-radius:7px;"></div>
<div class="t" style="left:602.2px;top:677.0px;font-size:20px;line-height:20px;color:#3a2806;letter-spacing:0.271px;">Digital Transformation</div>
<svg class="s" style="left:595.3px;top:727.2px;" width="40" height="40" viewBox="0 0 40 40"><circle cx="20" cy="20" r="19.6" fill="#efe6c8"/></svg>
<svg class="s" style="left:596.3px;top:728.2px;" width="38" height="38" viewBox="0 0 38 38"><defs><clipPath id="cpc"><circle cx="19.0" cy="19.0" r="19.0"/></clipPath></defs><g clip-path="url(#cpc)"><rect width="38" height="38" fill="#ebeae9"/><rect x="12.92" y="23.56" width="12.92" height="15.20" fill="#a8745a"/><path d="M0 38.00 L2.28 33.44 Q6.08 29.64 13.68 28.88 Q19.38 34.20 25.08 28.88 Q32.68 29.64 36.10 33.44 L38 38.00Z" fill="#4a2a30"/><ellipse cx="9.88" cy="18.24" rx="1.71" ry="3.04" fill="#c38d72"/><ellipse cx="28.88" cy="18.24" rx="1.71" ry="3.04" fill="#c38d72"/><ellipse cx="19.38" cy="19.00" rx="8.74" ry="10.83" fill="#d9a07e"/><path d="M10.64 16.72 Q9.50 3.80 19.38 2.66 Q29.26 3.80 28.12 16.72 Q26.98 11.40 19.38 11.02 Q11.78 11.40 10.64 16.72Z" fill="#121010"/><g stroke="#3a2a25" stroke-width="1.33" stroke-linecap="round"><line x1="14.44" y1="16.34" x2="17.10" y2="16.34"/><line x1="21.66" y1="16.34" x2="24.32" y2="16.34"/></g><path d="M16.72 24.32 Q19.38 25.46 22.04 24.32" stroke="#b0605a" stroke-width="1.33" fill="none" stroke-linecap="round"/></g></svg>
<div class="t" style="left:654.0px;top:738.3px;font-size:20px;line-height:20px;color:#c92f54;letter-spacing:0.440px;">25 Jun</div>
<div class="t" style="left:881.3px;top:738.3px;font-size:20px;line-height:20px;color:#6d6e6f;">1</div>
<svg class="s" style="left:898.0px;top:738.2px;" width="20" height="19" viewBox="0 0 20 19"><path d="M10 1.5 C15 1.5 18.5 4 18.5 8 C18.5 11.5 15.5 14.5 10.5 14.5 H8 L5 17.5 L4.5 13.8 C2.5 12.5 1.5 10.5 1.5 8 C1.5 4 5 1.5 10 1.5Z" fill="none" stroke="#6d6e6f" stroke-width="1.5" stroke-linejoin="round"/></svg>
<div class="t" style="left:929.5px;top:738.3px;font-size:20px;line-height:20px;color:#6d6e6f;">1</div>
<svg class="s" style="left:944.5px;top:738.2px;" width="22" height="18" viewBox="0 0 22 18"><g fill="none" stroke="#6d6e6f" stroke-width="1.6"><path d="M1.5 0.5 V9.5 Q1.5 14 6 14 H13.5"/><line x1="1.5" y1="5.5" x2="13.5" y2="5.5"/><circle cx="16.3" cy="5.5" r="2.6"/><circle cx="16.3" cy="14" r="2.6"/></g></svg>
<svg class="s" style="left:969.9px;top:737.7px;" width="10" height="16" viewBox="0 0 10 16"><path d="M0.5 0.6 L8.8 7.9 L0.5 15.2Z" fill="#6d6e6f" stroke="#6d6e6f" stroke-width="0.6" stroke-linejoin="round"/></svg>
<svg class="s" style="left:584px;top:837px;" width="18" height="18" viewBox="0 0 18 18"><g stroke="#6d6e6f" stroke-width="2.8" stroke-linecap="round"><line x1="9" y1="1.5" x2="9" y2="16.5"/><line x1="1.5" y1="9" x2="16.5" y2="9"/></g></svg>
<div class="t" style="left:610.0px;top:836.3px;font-size:23px;line-height:23px;color:#6d6e6f;letter-spacing:0.393px;-webkit-text-stroke:0.55px #6d6e6f;">Add Marketing request status</div>
<svg class="s" style="left:71.5px;top:1474px;" width="18" height="18" viewBox="0 0 18 18"><g stroke="#6d6e6f" stroke-width="2.8" stroke-linecap="round"><line x1="9" y1="1.5" x2="9" y2="16.5"/><line x1="1.5" y1="9" x2="16.5" y2="9"/></g></svg>
<div class="t" style="left:98.0px;top:1473.1px;font-size:23px;line-height:23px;color:#6d6e6f;letter-spacing:0.393px;-webkit-text-stroke:0.55px #6d6e6f;">Add Marketing request status</div>
<div class="r" style="left:1301px;top:275.5px;width:907px;height:300px;background:#fff;border:1px solid #e3e3e3;border-radius:10px;box-sizing:border-box;box-shadow:0 6px 24px rgba(0,0,0,0.10),0 1px 4px rgba(0,0,0,0.06);"></div>
<div class="t" style="left:1340.4px;top:314.8px;font-size:23px;line-height:23px;color:#1e1f21;letter-spacing:0.300px;-webkit-text-stroke:0.55px #1e1f21;">Groups</div>
<div class="t" style="left:1436.1px;top:315.4px;font-size:21px;line-height:21px;color:#6b60bd;transform:scaleX(0.9691);transform-origin:0 0;text-decoration:underline;text-underline-offset:1px;text-decoration-thickness:1.2px;">Send feedback</div>
<div class="t" style="left:2105.0px;top:315.2px;font-size:22.5px;line-height:22.5px;color:#6d6e6f;transform:scaleX(0.9046);transform-origin:0 0;-webkit-text-stroke:0.55px #6d6e6f;">Clear</div>
<svg class="s" style="left:1344.5px;top:400px;" width="12" height="18" viewBox="0 0 12 18"><g fill="#6d6e6f"><circle cx="2.4" cy="1.2" r="1.5"/><circle cx="10.3" cy="1.2" r="1.5"/><circle cx="2.4" cy="7.9" r="1.5"/><circle cx="10.3" cy="7.9" r="1.5"/><circle cx="2.4" cy="14.6" r="1.5"/><circle cx="10.3" cy="14.6" r="1.5"/></g></svg>
<div class="r" style="left:1373.5px;top:380px;width:365px;height:57.5px;background:#fff;border:1.5px solid #d0d0d0;border-radius:9px;box-sizing:border-box;"></div>
<div class="r" style="left:1751.5px;top:380px;width:300.5px;height:57.5px;background:#fff;border:1.5px solid #d0d0d0;border-radius:9px;box-sizing:border-box;"></div>
<svg class="s" style="left:1694px;top:403.2px;" width="22" height="13" viewBox="0 0 22 13"><path d="M2 2 L11 10.5 L20 2" fill="none" stroke="#6d6e6f" stroke-width="2.1" stroke-linecap="round" stroke-linejoin="round"/></svg>
<svg class="s" style="left:2008px;top:403.2px;" width="22" height="13" viewBox="0 0 22 13"><path d="M2 2 L11 10.5 L20 2" fill="none" stroke="#6d6e6f" stroke-width="2.1" stroke-linecap="round" stroke-linejoin="round"/></svg>
<svg class="s" style="left:2073.5px;top:405.5px;" width="27" height="7" viewBox="0 0 27 7"><g fill="#6d6e6f"><circle cx="3.2" cy="3.5" r="2.5"/><circle cx="13.5" cy="3.5" r="2.5"/><circle cx="23.8" cy="3.5" r="2.5"/></g></svg>
<svg class="s" style="left:2135.2px;top:398.6px;" width="20" height="20" viewBox="0 0 20 20"><g stroke="#6d6e6f" stroke-width="2.1" stroke-linecap="round"><line x1="1.6" y1="1.6" x2="18.2" y2="18.2"/><line x1="18.2" y1="1.6" x2="1.6" y2="18.2"/></g></svg>
<svg class="s" style="left:1344.5px;top:498px;" width="12" height="18" viewBox="0 0 12 18"><g fill="#6d6e6f"><circle cx="2.4" cy="1.2" r="1.5"/><circle cx="10.3" cy="1.2" r="1.5"/><circle cx="2.4" cy="7.9" r="1.5"/><circle cx="10.3" cy="7.9" r="1.5"/><circle cx="2.4" cy="14.6" r="1.5"/><circle cx="10.3" cy="14.6" r="1.5"/></g></svg>
<div class="r" style="left:1373.5px;top:478px;width:365px;height:57.5px;background:#fff;border:1.5px solid #d0d0d0;border-radius:9px;box-sizing:border-box;"></div>
<div class="r" style="left:1751.5px;top:478px;width:300.5px;height:57.5px;background:#fff;border:1.5px solid #d0d0d0;border-radius:9px;box-sizing:border-box;"></div>
<svg class="s" style="left:1694px;top:501.2px;" width="22" height="13" viewBox="0 0 22 13"><path d="M2 2 L11 10.5 L20 2" fill="none" stroke="#6d6e6f" stroke-width="2.1" stroke-linecap="round" stroke-linejoin="round"/></svg>
<svg class="s" style="left:2008px;top:501.2px;" width="22" height="13" viewBox="0 0 22 13"><path d="M2 2 L11 10.5 L20 2" fill="none" stroke="#6d6e6f" stroke-width="2.1" stroke-linecap="round" stroke-linejoin="round"/></svg>
<svg class="s" style="left:2073.5px;top:503.5px;" width="27" height="7" viewBox="0 0 27 7"><g fill="#6d6e6f"><circle cx="3.2" cy="3.5" r="2.5"/><circle cx="13.5" cy="3.5" r="2.5"/><circle cx="23.8" cy="3.5" r="2.5"/></g></svg>
<svg class="s" style="left:2135.2px;top:496.6px;" width="20" height="20" viewBox="0 0 20 20"><g stroke="#6d6e6f" stroke-width="2.1" stroke-linecap="round"><line x1="1.6" y1="1.6" x2="18.2" y2="18.2"/><line x1="18.2" y1="1.6" x2="1.6" y2="18.2"/></g></svg>
<svg class="s" style="left:1394px;top:399px;" width="26" height="20" viewBox="0 0 26 20"><g stroke="#6d6e6f" stroke-width="1.8" stroke-linecap="round"><line x1="4.5" y1="2" x2="20.5" y2="2"/><line x1="1" y1="10" x2="24" y2="10"/><line x1="4.5" y1="18" x2="20.5" y2="18"/></g></svg>
<div class="t" style="left:1432.5px;top:398.3px;font-size:23px;line-height:23px;color:#1e1f21;letter-spacing:0.229px;">Sections</div>
<div class="t" style="left:1771.5px;top:398.3px;font-size:23px;line-height:23px;color:#1e1f21;letter-spacing:0.191px;">Custom order</div>
<svg class="s" style="left:1393px;top:494px;" width="27" height="27" viewBox="0 0 27 27"><circle cx="14" cy="13" r="11.6" fill="none" stroke="#6d6e6f" stroke-width="1.7"/><path d="M8 11.5 L13.5 16.5 L19 11.5" fill="none" stroke="#6d6e6f" stroke-width="1.7" stroke-linecap="round" stroke-linejoin="round"/></svg>
<div class="t" style="left:1432.2px;top:496.4px;font-size:23px;line-height:23px;color:#1e1f21;letter-spacing:0.165px;">Department Requesting</div>
<svg class="s" style="left:1771px;top:494px;" width="27" height="28" viewBox="0 0 27 28"><g fill="none" stroke="#6d6e6f" stroke-width="1.7" stroke-linecap="round" stroke-linejoin="round"><path d="M7 25 V2 M2 7 L7 2 L12 7"/><line x1="15" y1="15.5" x2="19" y2="15.5"/><line x1="15" y1="20" x2="22" y2="20"/><line x1="15" y1="24.5" x2="25" y2="24.5"/></g></svg>
<div class="t" style="left:1805.3px;top:496.4px;font-size:23px;line-height:23px;color:#1e1f21;">Ascending</div>
</body></html>
